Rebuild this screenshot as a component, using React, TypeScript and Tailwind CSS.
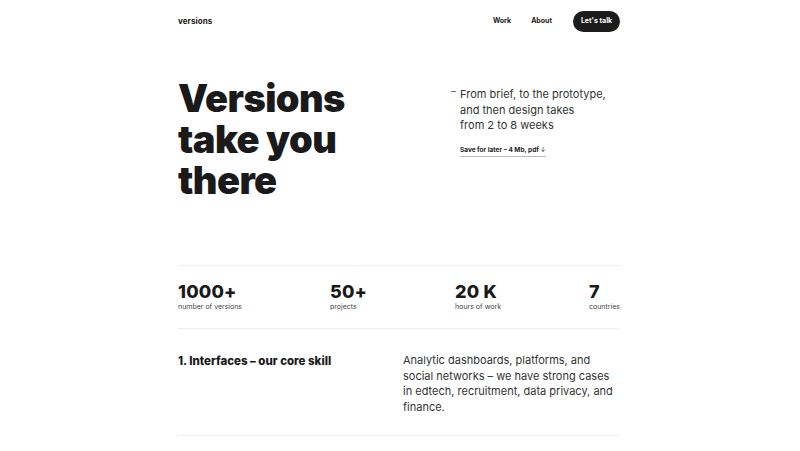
import React from "react";

export default function App() {
  const stats = [
    { n: "1000+", l: "number of versions" },
    { n: "50+", l: "projects" },
    { n: "20 K", l: "hours of work" },
    { n: "7", l: "countries" },
  ];
  return (
    <div className="min-h-[451px] w-full bg-white text-[#1a1a1a]" style={{ fontFamily: "Inter, 'Noto Sans', sans-serif" }}>
      <div className="ml-[178px] w-[442px]">
        <header className="flex h-[41px] items-center justify-between pt-[1px]">
          <div className="text-[8px] font-bold tracking-[0.01em]">versions</div>
          <nav className="flex items-center">
            <span className="text-[7px] font-bold">Work</span>
            <span className="ml-[20px] text-[7px] font-bold">About</span>
            <span className="ml-[21px] flex h-[21px] w-[47px] items-center justify-center rounded-full bg-[#1c1c1c] text-[7px] font-bold text-white">Let's talk</span>
          </nav>
        </header>

        <section className="flex pt-[37px] h-[224px]">
          <h1 className="w-[273px] text-[38px] font-black leading-[41px] tracking-[-0.015em]">
            Versions
            <br />
            take you
            <br />
            there
          </h1>
          <div className="flex pt-[9px]">
            <span className="mt-[-3px] mr-[4px] text-[10px] text-[#555]">–</span>
            <div>
              <p className="text-[11px] leading-[15.5px] text-[#333]">
                From brief, to the prototype,
                <br />
                and then design takes
                <br />
                from 2 to 8 weeks
              </p>
              <div className="mt-[7px] inline-block border-b border-[#bbb] pb-[1px] text-[6.5px] font-bold text-[#222]">
                Save for later – 4 Mb, pdf <span className="font-normal">↓</span>
              </div>
            </div>
          </div>
        </section>

        <div className="flex h-[64px] items-center justify-between border-y border-[#eeeeee]">
          {stats.map((s) => (
            <div key={s.n} className="flex flex-col">
              <span className="text-[18px] font-extrabold leading-[18px] tracking-[0.01em]">{s.n}</span>
              <span className="mt-[1px] text-[7px] leading-[9px] text-[#444]">{s.l}</span>
            </div>
          ))}
        </div>

        <div className="flex border-b border-[#eeeeee] pt-[24px] pb-[20px]">
          <div className="w-[225px] text-[11.5px] font-extrabold">1. Interfaces – our core skill</div>
          <p className="w-[212px] text-[11px] leading-[15.5px] text-[#333]">
            Analytic dashboards, platforms, and social networks – we have strong cases in edtech, recruitment, data privacy, and finance.
          </p>
        </div>
      </div>
    </div>
  );
}
